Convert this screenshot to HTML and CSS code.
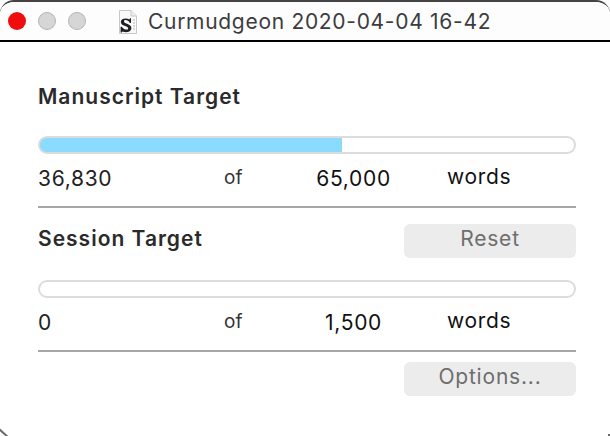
FILE: index.html
```html
<!DOCTYPE html>
<html lang="en">
<head>
    <meta charset="UTF-8">
    <meta name="viewport" content="width=device-width, initial-scale=1.0">
    <title>Curmudgeon 2020-04-04 16-42</title>
    <link rel="stylesheet" href="styles.css">
</head>
<body>
    <div class="window">
        <header class="titlebar">
            <div class="lights">
                <span class="light close"></span>
                <span class="light"></span>
                <span class="light"></span>
            </div>
            <svg class="doc-icon" width="18" height="24" viewBox="0 0 18 24">
                <path d="M.5 .5H12L17.5 6V23.5H.5Z" fill="#fafafa" stroke="#c8c8c8"/>
                <path d="M12 .5V6H17.5" fill="#eee" stroke="#c8c8c8"/>
                <path d="M12 13V8.2H11L10.4 9.4C7.4 7.6 1.8 8.2 1.8 12C1.8 16.2 9.2 15.6 9.2 18.4C9.2 20.4 5 20 2.8 16.8H1.6V22.6H2.8L3.6 21.4C7 23 12.4 22.2 12.4 18C12.4 13.6 5 14 5 11.2C5 9.4 9.4 9.6 10.8 13Z" fill="#202024"/>
                <path d="M13.5 10H16M14 13H16M14 16H16M14 19H16" stroke="#b5b5b5"/>
            </svg>
            <span class="title">Curmudgeon 2020-04-04 16-42</span>
        </header>

        <main class="content">
            <section class="target first">
                <div class="target-head">
                    <h2>Manuscript Target</h2>
                </div>
                <div class="bar"><div class="bar-fill" style="width: 56.5%"></div></div>
                <div class="counts">
                    <span class="current">36,830</span>
                    <span class="of">of</span>
                    <span class="goal">65,000</span>
                    <span class="unit">words</span>
                </div>
            </section>

            <section class="target">
                <div class="target-head">
                    <h2>Session Target</h2>
                    <button type="button">Reset</button>
                </div>
                <div class="bar"></div>
                <div class="counts">
                    <span class="current">0</span>
                    <span class="of">of</span>
                    <span class="goal">1,500</span>
                    <span class="unit">words</span>
                </div>
            </section>

            <div class="actions">
                <button type="button">Options...</button>
            </div>
        </main>
    </div>
</body>
</html>
```

FILE: styles.css
```css
html, body {
    height: 100%;
}

body {
    margin: 0;
    overflow: hidden;
    background: #fff;
    font-family: Inter, "Liberation Sans", sans-serif;
    color: #222;
}

.window {
    position: relative;
    display: flex;
    flex-direction: column;
    box-sizing: border-box;
    height: 436px;
    overflow: hidden;
    background: #fff;
    border-top: 2px solid #444;
    border-radius: 14px 14px 0 0;
}

/* edge of the window behind, showing in the bottom corners */
.window::before,
.window::after {
    content: "";
    position: absolute;
    background: #6a6a6a;
}

.window::before {
    left: -2px;
    bottom: 2px;
    width: 11px;
    height: 2px;
    transform: rotate(42deg);
}

.window::after {
    right: 0;
    bottom: 0;
    width: 2px;
    height: 2px;
}

.titlebar {
    display: flex;
    align-items: center;
    flex: none;
    box-sizing: border-box;
    height: 40px;
    padding-left: 8px;
    background: #fdfdfd;
    border-bottom: 2px solid #000;
    border-radius: 12px 12px 0 0;
}

.lights {
    display: flex;
    gap: 12px;
}

.light {
    box-sizing: border-box;
    width: 18px;
    height: 18px;
    border: 1.5px solid #b4b4b4;
    border-radius: 50%;
    background: #d6d6d6;
}

.light.close {
    border: none;
    background: #f00d0d;
}

.doc-icon {
    margin-left: 33px;
    margin-top: 1px;
}

.title {
    margin-left: 11px;
    font-size: 21px;
    letter-spacing: 0.7px;
    color: #3c3c3e;
}

.content {
    flex: 1;
    padding: 0 34px 0 38px;
    background: #fff;
}

.target {
    height: 144px;
    box-sizing: border-box;
    padding-top: 16px;
    border-bottom: 2px solid #a6a6a6;
}

.target-head {
    display: flex;
    justify-content: space-between;
    align-items: flex-start;
    height: 34px;
}

.first {
    height: 166px;
    padding-top: 40px;
}

.first .bar {
    margin-top: 20px;
}

h2 {
    margin: 0;
    font-size: 21px;
    line-height: 30px;
    font-weight: 600;
    letter-spacing: 1px;
    color: #2a2a2a;
}

button {
    box-sizing: border-box;
    width: 172px;
    height: 34px;
    padding: 0 0 5px;
    border: none;
    border-radius: 6px;
    background: #ececec;
    font-family: inherit;
    font-size: 21px;
    letter-spacing: 0.8px;
    color: #6e6e6e;
}

.bar {
    box-sizing: border-box;
    height: 18px;
    margin-top: 22px;
    border: 2px solid #dcdcdc;
    border-radius: 9px;
    overflow: hidden;
    background: #fff;
}

.bar-fill {
    box-sizing: content-box;
    height: 14px;
    margin: -2px 0 0 -2px;
    border: 2px solid #74b8da;
    border-right: none;
    border-radius: 9px 0 0 9px;
    background: #8bdaff;
}

.counts {
    display: grid;
    grid-template-columns: 186px 50px 159px 1fr;
    align-items: center;
    height: 30px;
    margin-top: 9px;
    font-size: 21px;
    letter-spacing: 0.7px;
}

.of {
    padding-bottom: 2px;
    font-size: 19px;
    letter-spacing: 0;
    color: #333;
}

.goal {
    text-align: center;
    color: #111;
}

.unit {
    padding: 0 0 4px 14px;
    color: #111;
}

.actions {
    display: flex;
    justify-content: flex-end;
    margin-top: 10px;
}
```
